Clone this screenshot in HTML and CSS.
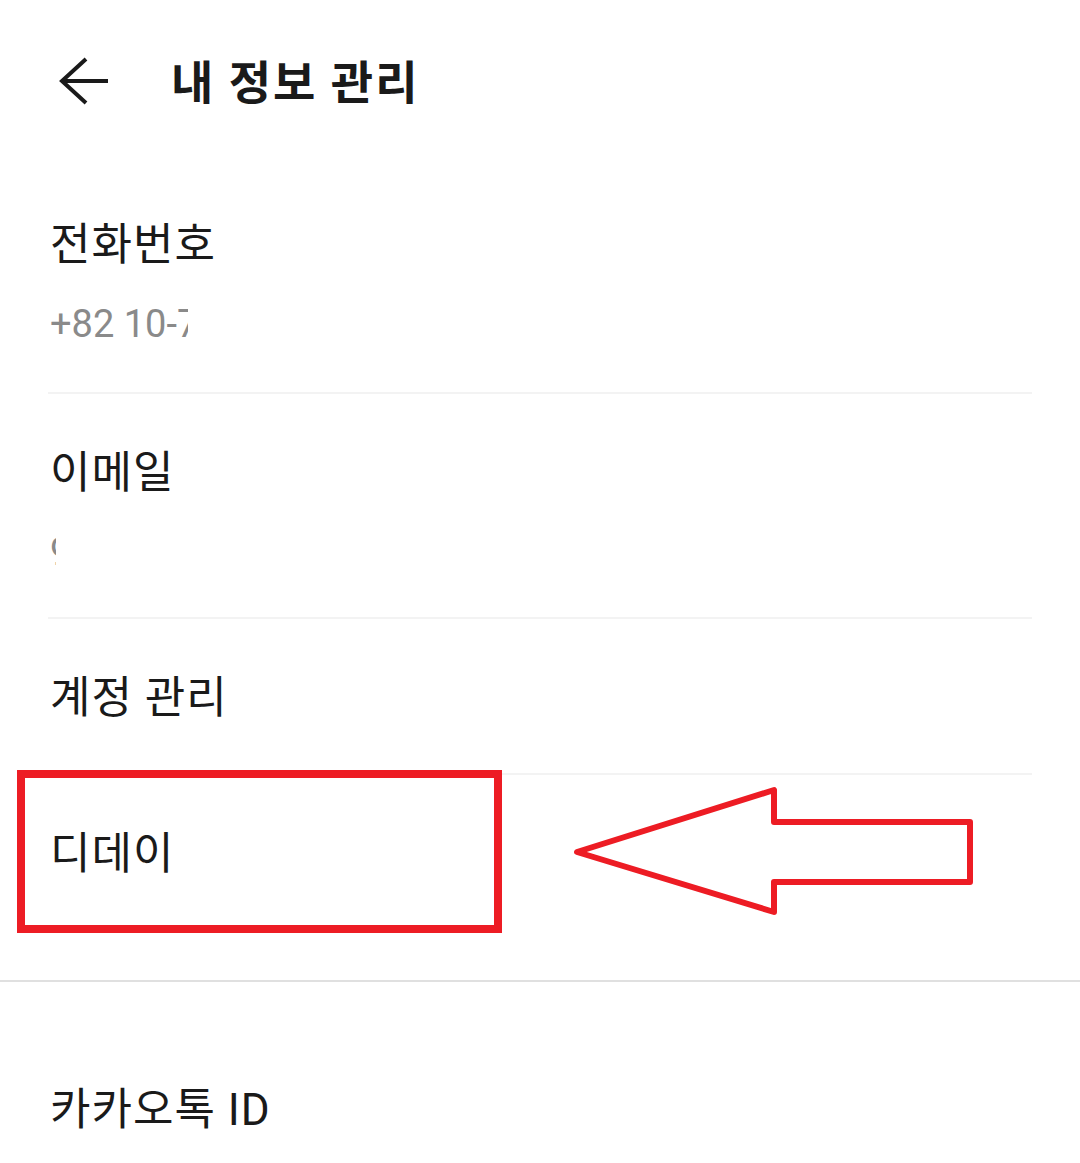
FILE: index.html
```html
<!DOCTYPE html>
<html lang="ko">
<head>
  <meta charset="UTF-8" />
  <meta name="viewport" content="width=device-width, initial-scale=1.0" />
  <title>내 정보 관리</title>
  <link rel="stylesheet" href="styles.css">
</head>
<body>
  <header class="kopf">
    <svg class="zurueck" width="52" height="52" viewBox="0 0 52 52" aria-hidden="true">
      <path d="M3 25 H50 M28 3 L4 25 L28 47" fill="none" stroke="#1a1a1a" stroke-width="4" stroke-linecap="butt" stroke-linejoin="miter"/>
    </svg>
    <h1>내 정보 관리</h1>
  </header>

  <section class="gruppe">
    <div class="eintrag">
      <div class="titel">전화번호</div>
      <div class="wert"><span class="maske telefon">+82 10-7</span></div>
    </div>
    <div class="eintrag mail-zeile">
      <div class="titel">이메일</div>
      <div class="wert"><span class="maske mail">9</span></div>
    </div>
    <div class="eintrag nur-titel">
      <div class="titel">계정 관리</div>
    </div>
    <div class="eintrag nur-titel letzter">
      <div class="titel">디데이</div>
    </div>
  </section>

  <section class="gruppe zweite">
    <div class="eintrag nur-titel">
      <div class="titel">카카오톡 ID</div>
    </div>
  </section>

  <div class="markierung"></div>
  <svg class="pfeil" width="420" height="150" viewBox="0 0 420 150" aria-hidden="true">
    <path d="M17 82 L214 20 L214 52 L410 52 L410 112 L214 112 L214 142 Z" fill="none" stroke="#ed1c24" stroke-width="6" stroke-linejoin="round"/>
  </svg>
</body>
</html>
```

FILE: styles.css
```css
body {
  margin: 0;
  background: #ffffff;
  font-family: Roboto, "Noto Sans CJK KR", sans-serif;
  color: #1a1a1a;
  position: relative;
  width: 1080px;
  height: 1163px;
  overflow: hidden;
}
.kopf {
  height: 166px;
  display: flex;
  align-items: center;
  padding-left: 58px;
}
.zurueck {
  flex: none;
  margin-top: -2px;
}
.kopf h1 {
  margin: 0 0 0 61px;
  font-size: 46px;
  font-weight: 700;
  line-height: 50px;
  letter-spacing: 2px;
}
.gruppe {
  margin: 0;
}
.eintrag {
  margin: 0 48px;
  padding: 54px 2px 46px;
  border-bottom: 2px solid #f3f3f3;
}
.eintrag.mail-zeile {
  padding-bottom: 43px;
}
.eintrag.nur-titel {
  padding-bottom: 50px;
}
.eintrag.letzter {
  border-bottom: none;
  padding-bottom: 101px;
}
.titel {
  font-size: 44px;
  line-height: 50px;
  font-weight: 400;
  letter-spacing: 1px;
}
.wert {
  margin-top: 32px;
  height: 44px;
  font-size: 38px;
  line-height: 44px;
  color: #8a8a8a;
  letter-spacing: 0;
}
.maske {
  display: inline-block;
  overflow: hidden;
  white-space: nowrap;
  vertical-align: top;
}
.telefon {
  width: 138px;
}
.mail {
  width: 6px;
}
.zweite {
  border-top: 2px solid #e0e0e0;
}
.zweite .eintrag {
  padding-top: 103px;
  border-bottom: none;
}
.markierung {
  position: absolute;
  left: 17px;
  top: 770px;
  width: 469px;
  height: 147px;
  border: 8px solid #ed1c24;
}
.pfeil {
  position: absolute;
  left: 560px;
  top: 770px;
}
```
